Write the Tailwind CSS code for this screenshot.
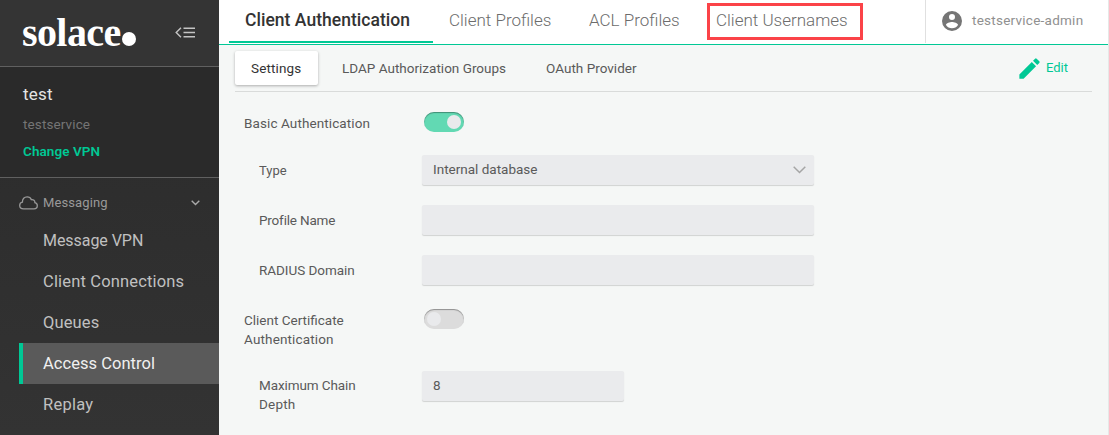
<!DOCTYPE html>
<html lang="en">
<head>
<meta charset="utf-8">
<title>Access Control</title>
<script src="https://cdn.jsdelivr.net/npm/@tailwindcss/browser@4"></script>
</head>
<body class="w-[1109px] h-[435px] overflow-hidden flex bg-[#f5f7f6] font-['Roboto',sans-serif] text-[13.5px] leading-[19px] text-[#5a5a5a]">
<aside class="w-[219px] h-full shrink-0 flex flex-col bg-linear-to-b from-[#2a2a2a] to-[#333]">
  <div class="h-[67px] shrink-0 flex border-b border-[#606060] bg-[#343434] pl-[22px]">
    <div class="w-[153px] flex pt-[12px] text-white">
      <span class="w-[100px] font-['Liberation_Serif',serif] font-bold text-[40px] leading-[42px] tracking-[-0.6px]">solace</span>
      <span class="size-[14px] rounded-full bg-white mt-[20px]"></span>
    </div>
    <svg class="w-[20px] h-[12px] mt-[27px]" viewBox="0 0 20 12" fill="none" stroke="#c4c4c4" stroke-width="1.4"><path d="M6 .7 1.200 5.500 6 10.300M8.500 1.200H20M8.500 5.500H20M8.500 9.800H20"/></svg>
  </div>
  <div class="h-[111px] shrink-0 border-b border-[#606060] bg-[#2a2a2a] pl-[23px] pt-[17px]">
    <div class="text-[17px] leading-5 tracking-[0.2px] text-[#e4e4e4]">test</div>
    <div class="mt-[11px] tracking-[0.12px] text-[#757575]">testservice</div>
    <div class="mt-[8px] font-semibold tracking-[0.08px] text-[#00c895]">Change VPN</div>
  </div>
  <div class="h-[42px] shrink-0 flex items-center pl-[19px] pt-[7px] text-[#999]">
    <svg class="w-[19px] h-[14px] mr-[5px]" viewBox="0 0 19 14" fill="none" stroke="#999" stroke-width="1.3"><path d="M4.500 12.900C2.300 12.900.7 11.500.7 9.500.7 7.700 1.800 6.500 3.400 6.200 3.300 3 5.300.8 8.100.8 10.300.8 11.700 1.900 12.400 3.700 14.600 3.400 16 4.700 15.900 6.700 17.500 7.100 18.300 8.300 18.300 9.800 18.300 11.700 17 12.900 15 12.900Z"/></svg>
    <span class="text-[13px] tracking-[0.1px]">Messaging</span>
    <svg class="ml-auto mr-[19px] w-[9px] h-[6px]" viewBox="0 0 9 6" fill="none" stroke="#aaa" stroke-width="1.4"><path d="m.7.7 3.800 3.800L8.300.7"/></svg>
  </div>
  <nav class="ml-[19px] text-[16.500px] text-[#c0c0c0]">
    <div class="h-[41px] pl-[24px] flex items-center text-[16px] tracking-[-0.05px]">Message VPN</div>
    <div class="h-[41px] pl-[24px] flex items-center text-[16.5px] tracking-[0.16px]">Client Connections</div>
    <div class="h-[41px] pl-[24px] flex items-center text-[16.5px] tracking-[0.12px]">Queues</div>
    <div class="h-[41px] pl-[20px] flex items-center border-l-4 border-[#00c895] bg-[#5a5a5a] text-[#f0f0f0] text-[16.5px] tracking-[0.04px]">Access Control</div>
    <div class="h-[41px] pl-[24px] flex items-center text-[16.5px] tracking-[0.24px]">Replay</div>
  </nav>
</aside>
<main class="flex-1 flex flex-col border-r border-[#e6e8e7]">
  <header class="h-[45px] shrink-0 flex bg-white border-b border-[#00c895] text-[17px] font-light text-[#6c6c6c]">
    <div class="ml-[10px] w-[204px] h-[43px] border-b-2 border-[#00c895] pl-[16px] pt-[11px] font-medium text-[#333] text-[17.5px] tracking-[0.03px]">Client Authentication</div>
    <div class="pl-[16px] w-[140px] pt-[11px]">Client Profiles</div>
    <div class="pl-[16px] w-[134px] pt-[11px]">ACL Profiles</div>
    <div class="h-[37px] w-[156px] mt-[3px] border-3 border-[#fb4348] pl-[6px] pt-[5px]">Client Usernames</div>
    <div class="ml-auto h-[43px] w-[183px] border-l border-[#e0e0e0] flex items-center pl-[14px] text-[13.5px] font-normal text-[#909090]">
      <svg class="size-6 mr-[8px] -mt-px" viewBox="0 0 24 24" fill="#757575"><path d="M12 2a10 10 0 1 0 0 20 10 10 0 0 0 0-20Zm0 3a3 3 0 1 1 0 6 3 3 0 0 1 0-6Zm0 14.200a7.200 7.200 0 0 1-6-3.220c.03-1.990 4-3.080 6-3.080s5.970 1.090 6 3.080a7.200 7.200 0 0 1-6 3.220Z"/></svg>
      <span class="-mt-[2px] tracking-[0.25px]">testservice-admin</span>
    </div>
  </header>
  <div class="ml-[16px] mr-[16px] h-[47px] shrink-0 border-b border-[#d9dbda] flex pt-[6px] leading-[34px]">
    <div class="w-[83px] h-[34px] rounded-xs bg-white shadow-[0_1px_3px_rgba(0,0,0,.3)] pl-[16px] text-[#333] tracking-[0.12px]">Settings</div>
    <div class="ml-[24px] w-[204px] tracking-[0.01px]">LDAP Authorization Groups</div>
    <div class="tracking-[0.02px]">OAuth Provider</div>
    <div class="ml-auto mr-[24px] flex text-[13px] text-[#00c895]">
      <svg class="size-[27px] mt-[4px] mr-[3px]" viewBox="0 0 24 24" fill="#00c895"><path d="M3 17.250V21h3.750L17.810 9.940l-3.750-3.750L3 17.250ZM20.710 7.040a1 1 0 0 0 0-1.410l-2.340-2.340a1 1 0 0 0-1.410 0l-1.830 1.830 3.750 3.750 1.830-1.830Z"/></svg>
      <span>Edit</span>
    </div>
  </div>
  <div class="flex flex-col pt-[20px] pl-[25px]">
    <div class="flex h-[43px]">
      <div class="w-[180px] pt-[2px] tracking-[0.1px]">Basic Authentication</div>
      <div class="w-10 h-5 rounded-full bg-[#62d9b3] shadow-[inset_0_1px_1px_rgba(0,0,0,.35)] flex justify-end p-[3px]"><div class="size-[14px] rounded-full bg-[#e9eaec]"></div></div>
    </div>
    <div class="flex h-[50px] pl-[15px]">
      <div class="w-[163px] pt-[6px] text-[13px]">Type</div>
      <div class="w-[392px] h-[30px] rounded-xs bg-[#eaebed] shadow-[0_1px_1px_rgba(0,0,0,.15)] flex justify-between pl-[11px] pr-[8px] pt-[5px]">Internal database<svg class="w-[13px] h-[8px] mt-[6px]" viewBox="0 0 13 8" fill="none" stroke="#a5a5a5" stroke-width="1.5"><path d="m.7.7 5.800 5.800L12.300.7"/></svg></div>
    </div>
    <div class="flex h-[50px] pl-[15px]">
      <div class="w-[163px] pt-[6px] tracking-[-0.18px]">Profile Name</div>
      <div class="w-[392px] h-[30px] rounded-xs bg-[#eaebed] shadow-[0_1px_1px_rgba(0,0,0,.15)]"></div>
    </div>
    <div class="flex h-[50px] pl-[15px]">
      <div class="w-[163px] pt-[6px] tracking-[-0.04px]">RADIUS Domain</div>
      <div class="w-[392px] h-[30px] rounded-xs bg-[#eaebed] shadow-[0_1px_1px_rgba(0,0,0,.15)]"></div>
    </div>
    <div class="flex h-[66px] pt-[4px]">
      <div class="w-[180px] pt-[2px]">Client Certificate<br><span class="tracking-[0.15px]">Authentication</span></div>
      <div class="w-10 h-5 rounded-full bg-[#dcdcdc] shadow-[inset_0_1px_1px_rgba(0,0,0,.35)] flex p-[3px]"><div class="size-[14px] rounded-full bg-[#e9eaec]"></div></div>
    </div>
    <div class="flex pl-[15px]">
      <div class="w-[163px] pt-[5px] tracking-[-0.1px]">Maximum Chain<br><span class="tracking-[0.2px]">Depth</span></div>
      <div class="w-[202px] h-[30px] rounded-xs bg-[#eaebed] shadow-[0_1px_1px_rgba(0,0,0,.15)] pl-[11px] pt-[5px]">8</div>
    </div>
  </div>
</main>
</body>
</html>
